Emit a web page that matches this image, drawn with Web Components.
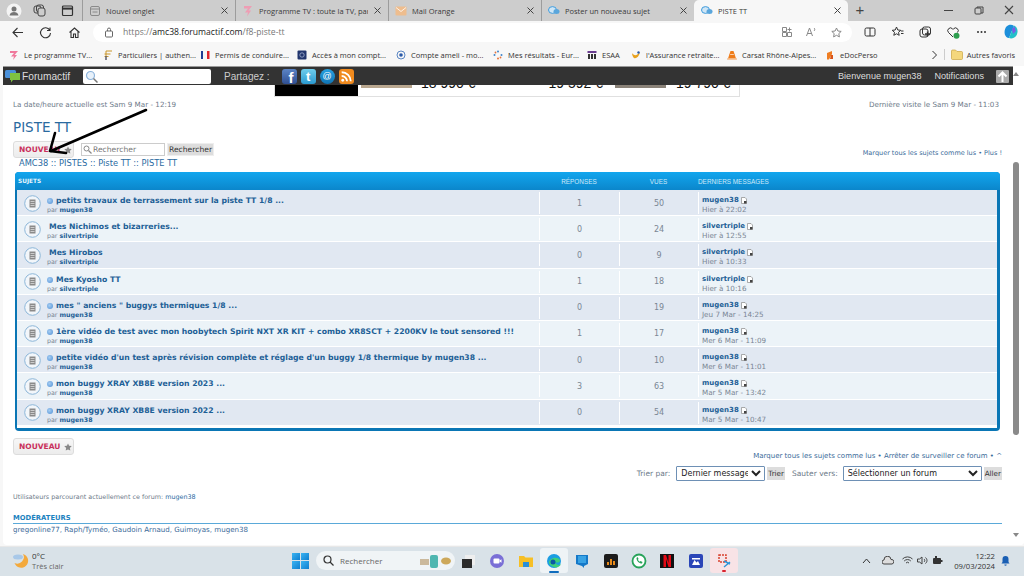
<!DOCTYPE html>
<html lang="fr">
<head>
<meta charset="utf-8">
<title>PISTE TT</title>
<style>
  html, body { margin: 0; height: 100%; overflow: hidden; }
  body {
    width: 1024px; height: 576px; position: relative;
    display: flex; flex-direction: column;
    font-family: "Segoe UI", "Open Sans", "Noto Sans", sans-serif;
    background: #f7f7f7;
  }
</style>
</head>
<body>
<tab-strip>
  <browser-tab icon="blank" label="Nouvel onglet"></browser-tab>
  <browser-tab icon="tv" label="Programme TV : toute la TV, par"></browser-tab>
  <browser-tab icon="mail" label="Mail Orange"></browser-tab>
  <browser-tab icon="chat" label="Poster un nouveau sujet"></browser-tab>
  <browser-tab icon="chat" label="PISTE TT" active></browser-tab>
</tab-strip>
<address-bar></address-bar>
<bookmark-bar>
  <bookmark-item w="94" icon="tv" label="Le programme TV..."></bookmark-item>
  <bookmark-item w="97" icon="franc" label="Particuliers | authen..."></bookmark-item>
  <bookmark-item w="97" icon="flag" label="Permis de conduire..."></bookmark-item>
  <bookmark-item w="99" icon="bank" label="Accès à mon compt..."></bookmark-item>
  <bookmark-item w="97" icon="ameli" label="Compte ameli - mo..."></bookmark-item>
  <bookmark-item w="94" icon="dots" label="Mes résultats - Eur..."></bookmark-item>
  <bookmark-item w="44" icon="esaa" label="ESAA"></bookmark-item>
  <bookmark-item w="96" icon="wing" label="l'Assurance retraite..."></bookmark-item>
  <bookmark-item w="98" icon="cone" label="Carsat Rhône-Alpes..."></bookmark-item>
  <bookmark-item w="80" icon="edoc" label="eDocPerso"></bookmark-item>
</bookmark-bar>
<forum-window>
  <forum-toolbar slot="top"></forum-toolbar>
  <forum-page></forum-page>
</forum-window>
<win-taskbar></win-taskbar>

<script>
const SANS = '"DejaVu Sans", Verdana, sans-serif';

class TabStrip extends HTMLElement {
  connectedCallback() {
    this.attachShadow({ mode: 'open' });
    this.shadowRoot.innerHTML = `
      <style>
        :host { display: flex; height: 21px; background: #cdcdcd; flex: none; align-items: stretch; }
        .left { width: 82px; display: flex; align-items: center; flex: none; position: relative; }
        .left svg { position: absolute; top: 4px; }
        .plus { width: 24px; text-align: center; color: #444; font-size: 15px; line-height: 20px; font-family: "Liberation Sans", sans-serif; }
        .win { margin-left: auto; display: flex; align-items: center; padding-right: 0; }
        .win svg { width: 30px; height: 11px; }
      </style>
      <div class="left">
        <svg style="left:6px;top:3px" width="16" height="16" viewBox="0 0 16 16"><circle cx="8" cy="8" r="7.5" fill="#f4f4f4"/><circle cx="8" cy="6" r="2.5" fill="#777"/><path d="M3.5 12.5c.6-2.8 2.4-3.6 4.5-3.6s3.9.8 4.5 3.6z" fill="#777"/></svg>
        <svg style="left:33px" width="13" height="13" viewBox="0 0 13 13" fill="none" stroke="#444"><rect x="1" y="2" width="7" height="7" rx="2"/><rect x="3.5" y="1" width="7" height="7" rx="2"/><rect x="5" y="4" width="7" height="8" rx="2" fill="#cdcdcd"/></svg>
        <svg style="left:61px" width="13" height="13" viewBox="0 0 13 13" fill="none" stroke="#333" stroke-width="1.2"><rect x="1.5" y="2" width="10" height="9.5" rx="1"/><path d="M1.5 4.6h10" stroke-width="2"/></svg>
      </div>
      <slot></slot>
      <div class="plus">+</div>
      <div class="win">
        <svg viewBox="0 0 30 11"><path d="M10 5.5h9" stroke="#444" fill="none"/></svg>
        <svg viewBox="0 0 30 11"><g fill="none" stroke="#444"><rect x="11" y="3" width="6" height="6" rx="1"/><path d="M13 3V2h6v6h-2"/></g></svg>
        <svg viewBox="0 0 30 11" style="width:30px"><path d="M11 1l8 8M19 1l-8 8" stroke="#444" stroke-width="1.1" fill="none"/></svg>
      </div>`;
  }
}
customElements.define('tab-strip', TabStrip);

class BrowserTab extends HTMLElement {
  connectedCallback() {
    const icons = {
      blank: '<rect x="1.5" y="1.5" width="9" height="9" rx="1.5" fill="none" stroke="#8a8a8a"/><path d="M1.5 4h9M3.5 7h5" stroke="#8a8a8a" fill="none"/>',
      tv: '<path d="M2 1h8L6.5 5.5H9l-4 6 1-4H3l3-4H2z" fill="#ee9db4"/>',
      mail: '<rect x="0.5" y="1.5" width="11" height="9" rx="1" fill="#eebd8e"/><path d="M1 2.5l5 4 5-4" fill="none" stroke="#fff" stroke-width=".8"/>',
      chat: '<ellipse cx="4.5" cy="5" rx="4" ry="3.4" fill="#cfe6f6" stroke="#3f9bdc"/><ellipse cx="8.5" cy="6.5" rx="3" ry="2.5" fill="#5aa6dc"/>'
    };
    const active = this.hasAttribute('active');
    this.attachShadow({ mode: 'open' });
    this.shadowRoot.innerHTML = `
      <style>
        :host { display: flex; width: 153px; box-sizing: border-box; align-items: center; padding: 0 6px 0 6px; gap: 5px; position: relative; flex: none;
                font-size: 7.500px; color: #3a3a3a; border-left: ${active ? '0' : '1px solid #9c9c9c'}; background-clip: padding-box; }
        :host([active]) { background: #f7f7f7; border-radius: 5px 5px 0 0; width: 154px; padding-left: 7px; }
        .label { flex: 1; white-space: nowrap; overflow: hidden; }
        svg { flex: none; }
        .x { flex: none; width: 9px; height: 9px; }
      </style>
      <svg width="12" height="12" viewBox="0 0 12 12">${icons[this.getAttribute('icon')]}</svg>
      <span class="label">${this.getAttribute('label')}</span>
      <svg class="x" viewBox="0 0 9 9"><path d="M1.500 1.500l6 6M7.500 1.500l-6 6" stroke="#444" fill="none"/></svg>`;
  }
}
customElements.define('browser-tab', BrowserTab);

class AddressBar extends HTMLElement {
  connectedCallback() {
    this.attachShadow({ mode: 'open' });
    this.shadowRoot.innerHTML = `
      <style>
        :host { display: flex; height: 22px; flex: none; align-items: center; background: #f7f7f7; }
        .nav { display: flex; width: 93px; flex: none; justify-content: space-around; padding: 0 4px 0 3px; box-sizing: border-box; }
        .url { width: 759px; height: 19px; flex: none; background: #fff; border-radius: 10px; display: flex; align-items: center; box-sizing: border-box; padding: 0 10px 0 11px; font-size: 8.600px; color: #777; }
        .url b { font-weight: 400; color: #222; }
        .u { margin-left: 9px; }
        .right { margin-left: auto; display: flex; gap: 14px; }
        .ext { display: flex; gap: 15px; padding-left: 12px; align-items: center; }
        svg { display: block; flex: none; }
      </style>
      <div class="nav">
        <svg width="13" height="13" viewBox="0 0 13 13" fill="none" stroke="#333" stroke-width="1.1"><path d="M12 6.5H2M6.5 2L2 6.5 6.5 11"/></svg>
        <svg width="13" height="13" viewBox="0 0 13 13" fill="none" stroke="#333" stroke-width="1.1"><path d="M10.8 4.2A5 5 0 1 0 11.5 7M11 1.500v3H8"/></svg>
        <svg width="13" height="13" viewBox="0 0 13 13" fill="none" stroke="#333" stroke-width="1.1"><path d="M1.500 6.500L6.500 2l5 4.500M3 5.500V11.500h2.500V8h2v3.500H10V5.500"/></svg>
      </div>
      <div class="url">
        <svg width="10" height="11" viewBox="0 0 10 11" fill="none" stroke="#666"><rect x="1.500" y="4" width="7" height="6" rx="1"/><path d="M3.500 4V2.500a1.500 1.500 0 0 1 3 0V4"/></svg>
        <span class="u">https://<b>amc38.forumactif.com</b>/f8-piste-tt</span>
        <div class="right">
          <svg width="10" height="10" viewBox="0 0 10 10" fill="none" stroke="#888"><path d="M.5.5h4v4h-4zM.5 5.500h4v4h-4zM5.500 5.500h4v4h-4zM5.500 2.500h4"/><path d="M7.500.5v4"/></svg>
          <svg width="11" height="10" viewBox="0 0 11 10" fill="none" stroke="#888"><path d="M.5 9l3-8 3 8M1.500 6.500h4M8 1c1 .8 1 2 0 3"/></svg>
          <svg width="11" height="11" viewBox="0 0 11 11" fill="none" stroke="#888"><path d="M5.500 1l1.400 3 3.300.4-2.400 2.200.6 3.300-2.900-1.600-2.900 1.600.6-3.300L.8 4.400 4.100 4z"/></svg>
        </div>
      </div>
      <div class="ext">
        <svg width="12" height="12" viewBox="0 0 12 12" fill="none" stroke="#333"><rect x="1" y="2" width="10" height="8" rx="1.500"/><path d="M6 2v8"/></svg>
        <svg width="13" height="12" viewBox="0 0 13 12" fill="none" stroke="#333"><path d="M5.500 1l1.300 3 3 .3-2.300 2 .7 3-2.700-1.500-2.700 1.500.7-3-2.300-2 3-.3zM10 5h2.500M10 7.500h2.500"/></svg>
        <svg width="13" height="13" viewBox="0 0 13 13" fill="none" stroke="#333"><rect x="1" y="3" width="8" height="8" rx="2"/><rect x="3.500" y="1" width="8" height="8" rx="2"/><path d="M6 8h5M8.500 5.500v5" stroke-width="1.300"/></svg>
        <svg width="13" height="13" viewBox="0 0 13 13"><path d="M6 11L1.500 6.500a2.700 2.700 0 0 1 4-3.700l.5.500.5-.5a2.700 2.700 0 0 1 4 3.700" fill="none" stroke="#333"/><circle cx="9.500" cy="9.800" r="3" fill="#2e9e4f"/></svg>
        <svg width="13" height="12" viewBox="0 0 13 12" fill="#333"><circle cx="3" cy="6" r="1"/><circle cx="6.500" cy="6" r="1"/><circle cx="10" cy="6" r="1"/></svg>
        <svg width="16" height="16" viewBox="0 0 16 16"><path d="M3 3c3-3 6-2.500 8-1L8 9l-2 5C2 14 0 8 3 3z" fill="#1c8fdb"/><path d="M11 1.500c4 1.500 4.500 7 2 10.500-1.500 2-4.500 3-7 2L8 9z" fill="#23c0c8"/><path d="M9 5l2.500-2.500L13 7l-3 3z" fill="#7a5be6"/></svg>
      </div>`;
  }
}
customElements.define('address-bar', AddressBar);

class BookmarkBar extends HTMLElement {
  connectedCallback() {
    this.attachShadow({ mode: 'open' });
    this.shadowRoot.innerHTML = `
      <style>
        :host { display: flex; height: 23px; flex: none; align-items: center; background: #f7f7f7; padding-left: 9px; font-size: 7.500px; color: #333; }
        .more { margin-left: auto; display: flex; align-items: center; gap: 4px; padding-right: 9px; white-space: nowrap; }
        .sep { width: 1px; height: 11px; background: #ccc; margin: 0 2px; }
      </style>
      <slot></slot>
      <div class="more">
        <svg width="7" height="10" viewBox="0 0 7 10"><path d="M1.500 1l4 4-4 4" fill="none" stroke="#333"/></svg>
        <span class="sep"></span>
        <svg width="12" height="11" viewBox="0 0 12 11"><path d="M.5 2a1 1 0 0 1 1-1h3l1.500 1.500h4.500a1 1 0 0 1 1 1V9.500a1 1 0 0 1-1 1h-9a1 1 0 0 1-1-1z" fill="#f4d77c" stroke="#c9a441" stroke-width=".7"/></svg>
        <span>Autres favoris</span>
      </div>`;
  }
}
customElements.define('bookmark-bar', BookmarkBar);

class BookmarkItem extends HTMLElement {
  connectedCallback() {
    const icons = {
      tv: '<path d="M1 1h8L5.500 5H8l-4 5 1-3.500H2l3-3.500H1z" fill="#f0799c"/>',
      franc: '<path d="M3 1h6M3 1v9M1.500 4h6M1.500 6.500h4" stroke="#c9962b" fill="none"/><path d="M3 6v4" stroke="#26408f" fill="none"/>',
      flag: '<path d="M1 1h2v8H1z" fill="#1f3f95"/><path d="M7 1h2.500v8H7z" fill="#e1262d"/>',
      bank: '<rect x=".5" y=".5" width="9" height="9" rx="1" fill="#22366e"/><circle cx="5" cy="5" r="2.200" fill="none" stroke="#b8c4e0" stroke-width=".7"/>',
      ameli: '<circle cx="5" cy="5" r="4" fill="none" stroke="#5a86c4"/><circle cx="5" cy="5" r="1.800" fill="#2a5aa8"/>',
      dots: '<g fill="#3f84c9"><circle cx="5" cy="1.500" r="1"/><circle cx="1.500" cy="5" r="1"/><circle cx="8.500" cy="5" r="1"/></g><g fill="#e8733a"><circle cx="5" cy="8.500" r="1"/><circle cx="2.500" cy="2.500" r=".9"/><circle cx="7.500" cy="7.500" r=".9"/></g>',
      esaa: '<rect x=".5" y="1" width="9" height="2" fill="#6a3d8f"/><path d="M1 4h2v5H1zM4 4h2v5H4zM7 4h2v5H7z" fill="#333"/>',
      wing: '<path d="M1 3c2 3 5 3 8-1-1 5-4 7-6 6C2 7.500 1 5 1 3z" fill="#e8a21f"/><circle cx="7.500" cy="2.500" r="1.200" fill="#2a5aa8"/>',
      cone: '<path d="M3.500 1h3L9 8.500H1z" fill="#ee7c1a"/><path d="M.5 8.500h9v1h-9zM3 4h4v1H3z" fill="#fff" stroke="#ee7c1a" stroke-width=".4"/>',
      edoc: '<path d="M2 3l5-2v3L4 9.500H2z" fill="#ef7d22"/><path d="M6 5h2v4H5z" fill="#d9541a"/>'
    };
    this.attachShadow({ mode: 'open' });
    this.shadowRoot.innerHTML = `
      <style>
        :host { display: flex; align-items: center; gap: 5px; flex: none; white-space: nowrap; width: ${this.getAttribute('w')}px; }
        svg { flex: none; }
      </style>
      <svg width="10" height="10" viewBox="0 0 10 10">${icons[this.getAttribute('icon')]}</svg><span>${this.getAttribute('label')}</span>`;
  }
}
customElements.define('bookmark-item', BookmarkItem);

class ForumWindow extends HTMLElement {
  connectedCallback() {
    this.attachShadow({ mode: 'open' });
    this.shadowRoot.innerHTML = `
      <style>
        :host { display: flex; height: 479px; flex: none; position: relative; margin-left: 3px; background: #fff; border-radius: 0 0 4px 4px; overflow: hidden; }
        .main { flex: 1; min-width: 0; display: flex; flex-direction: column; }
        .bar { width: 11px; flex: none; background: #fff; position: relative; }
        .thumb { width: 6px; height: 273px; margin-top: 96px; border-radius: 3px; background: #8a8a8a; }
        .up, .down { width: 0; height: 0; border-left: 3px solid transparent; border-right: 3px solid transparent; position: absolute; left: 0; }
        .up { top: 6px; border-bottom: 4px solid #888; }
        .down { bottom: 8px; border-top: 4px solid #888; }
        svg { position: absolute; left: 0; top: 0; pointer-events: none; }
      </style>
      <div class="main"><slot name="top"></slot><slot></slot></div>
      <div class="bar"><span class="up"></span><div class="thumb"></div><span class="down"></span></div>
      <svg width="200" height="120" viewBox="3 66 200 120" fill="none" stroke="#000" stroke-width="2.600" stroke-linecap="round" stroke-linejoin="round">
        <path d="M146 110L51 151"/><path d="M55 133L50 151L66 153"/>
      </svg>`;
  }
}
customElements.define('forum-window', ForumWindow);

class ForumToolbar extends HTMLElement {
  connectedCallback() {
    this.attachShadow({ mode: 'open' });
    this.shadowRoot.innerHTML = `
      <style>
        :host { display: flex; height: 19px; flex: none; align-items: center; background: #333; color: #ddd; font-family: "Liberation Sans", Arial, sans-serif; font-size: 9.100px; position: relative; z-index: 1; border-top: 1px solid #999; box-sizing: border-box; }
        .logo { display: flex; align-items: center; gap: 2px; padding-left: 2px; width: 80px; flex: none; box-sizing: border-box; font-size: 10.200px; }
        .search { width: 128px; height: 15px; background: #fff; border-radius: 2px; flex: none; display: flex; align-items: center; padding-left: 2px; box-sizing: border-box; }
        .share { margin-left: 13px; font-size: 10px; color: #ccc; flex: none; }
        .soc { display: flex; gap: 4px; margin-left: 12px; flex: none; }
        .soc span { width: 15px; height: 15px; border-radius: 3px; color: #fff; font: 700 11px/15px "Liberation Sans", sans-serif; text-align: center; display: block; overflow: hidden; }
        .user { margin-left: auto; display: flex; align-items: center; }
        .up { width: 13px; height: 13px; background: #aaa; border-radius: 1px; margin: 0 4px 0 12px; }
        .up svg { display: block; }
        .note { margin-left: 13px; }
      </style>
      <div class="logo">
        <svg width="15" height="14" viewBox="0 0 15 14"><rect x="0" y="1" width="11" height="8" rx="1.500" fill="#4a90d9"/><path d="M5 4h10v7H8l-2 2.500V11H5z" fill="#7fc241"/></svg>
        <span>Forumactif</span>
      </div>
      <div class="search"><svg width="15" height="13" viewBox="0 0 15 13" fill="none"><circle cx="5.500" cy="5.500" r="4" stroke="#8db4dc" stroke-width="1.200" fill="#e8f1fa"/><path d="M8.500 8.500l4 4" stroke="#777" stroke-width="1.500"/></svg></div>
      <span class="share">Partagez :</span>
      <div class="soc">
        <span style="background:linear-gradient(#5b84c4,#2f4f93);text-align:right;padding-right:3px;width:12px;font-size:15px;line-height:17px">f</span>
        <span style="background:linear-gradient(#6fcdec,#2b9ad0);font-size:13px">t</span>
        <span style="background:linear-gradient(#28a2e2,#0f74b4);border-radius:50%;font-size:9px;font-weight:400;line-height:14px">@</span>
        <span style="background:#f08a1e"><svg width="15" height="15" viewBox="0 0 14 14" fill="none" stroke="#fff" stroke-width="1.700"><circle cx="3.500" cy="10.500" r="1.300" fill="#fff" stroke="none"/><path d="M2.500 6.500a5 5 0 0 1 5 5M2.500 3a8.500 8.500 0 0 1 8.500 8.500"/></svg></span>
      </div>
      <div class="user">
        <span>Bienvenue mugen38</span><span class="note">Notifications</span>
        <div class="up"><svg width="13" height="13" viewBox="0 0 13 13" fill="none" stroke="#fff" stroke-width="2"><path d="M6.500 12V3M2.500 6.500l4-4 4 4"/></svg></div>
      </div>`;
  }
}
customElements.define('forum-toolbar', ForumToolbar);

class TopicRow extends HTMLElement {
  connectedCallback() {
    const a = n => this.getAttribute(n);
    this.attachShadow({ mode: 'open' });
    this.shadowRoot.innerHTML = `
      <style>
        :host { display: grid; grid-template-columns: 522px 80px 79px 1fr; height: 25.200px; margin-bottom: 1px; background: var(--row, #e1e8f2); font-family: ${SANS}; color: #7a8694; }
        .topic { display: flex; align-items: center; padding-left: 7px; min-width: 0; }
        .ic { flex: none; width: 17px; height: 17px; margin-right: 6px; }
        .txt { padding-top: 4px; }
        .t { white-space: nowrap; font: 700 7.700px/10px ${SANS}; color: #1d5f96; display: flex; align-items: center; }
        .dot { width: 6px; height: 6px; border-radius: 50%; background: radial-gradient(circle at 40% 40%, #a6cdf2, #4f90d6); margin-right: 3px; flex: none; }
        .nodot { width: 2px; flex: none; }
        .par { font-size: 6.300px; line-height: 8px; }
        .par b { color: #1d5f96; }
        .num { display: flex; align-items: center; justify-content: center; font-size: 8px; border-left: 1px solid #fff; margin: 2px 0; }
        .last { border-left: 1px solid #fff; margin: 2px 0; padding: 4px 0 0 3px; font-size: 7.200px; line-height: 9px; display: flex; flex-direction: column; justify-content: center; }
        .last b { color: #1d5f96; font-size: 7px; display: flex; align-items: center; gap: 2px; }
      </style>
      <div class="topic">
        <svg class="ic" viewBox="0 0 17 17"><circle cx="8.500" cy="8.500" r="7.800" fill="#f2f6fa" stroke="#8cb6d8" stroke-width="1"/><rect x="5.500" y="4.500" width="6" height="8" fill="#8a8a8a"/><path d="M6.500 6.500h4M6.500 8.500h4M6.500 10.500h4" stroke="#e6e6e6" stroke-width=".7"/></svg>
        <div class="txt">
          <div class="t">${this.hasAttribute('nodot') ? '<span class="nodot"></span>' : '<span class="dot"></span>'}<span>${a('topic')}</span></div>
          <div class="par">par <b>${a('by')}</b></div>
        </div>
      </div>
      <div class="num">${a('replies')}</div>
      <div class="num">${a('views')}</div>
      <div class="last">
        <b>${a('by')}<svg width="6" height="7" viewBox="0 0 6 7"><path d="M.5.500h3.500L5.500 2v4.500H.5z" fill="#fff" stroke="#888" stroke-width=".7"/><rect x="3" y="4" width="2.500" height="2.500" fill="#444"/></svg></b>
        <span>${a('date')}</span>
      </div>`;
  }
}
customElements.define('topic-row', TopicRow);

class NewButton extends HTMLElement {
  connectedCallback() {
    this.attachShadow({ mode: 'open' });
    this.shadowRoot.innerHTML = `
      <style>
        :host { display: inline-flex; width: 61px; height: 17px; box-sizing: border-box; align-items: center; gap: 4px; padding-left: 5px; background: linear-gradient(#f7f7f7, #ececec); border: 1px solid #ddd; border-radius: 3px; font: 700 7.500px ${SANS}; color: #c9305c; }
      </style>
      NOUVEAU<svg width="8" height="8" viewBox="0 0 10 10"><path d="M5 .5l1.400 3 3.300.4-2.400 2.200.6 3.300L5 8.200 2.100 9.400l.6-3.300L.3 3.900l3.300-.4z" fill="#888"/></svg>`;
  }
}
customElements.define('new-button', NewButton);

class ForumPage extends HTMLElement {
  connectedCallback() {
    const rows = [
      ['petits travaux de terrassement sur la piste TT 1/8 ...', 'mugen38', 1, 50, 'Hier à 22:02'],
      ['Mes Nichimos et bizarreries...', 'silvertriple', 0, 24, 'Hier à 12:55', 1],
      ['Mes Hirobos', 'silvertriple', 0, 9, 'Hier à 10:33', 1],
      ['Mes Kyosho TT', 'silvertriple', 1, 18, 'Hier à 10:16'],
      ['mes " anciens " buggys thermiques 1/8 ...', 'mugen38', 0, 19, 'Jeu 7 Mar - 14:25'],
      ['1ère vidéo de test avec mon hoobytech Spirit NXT XR KIT + combo XR8SCT + 2200KV le tout sensored !!!', 'mugen38', 1, 17, 'Mer 6 Mar - 11:09'],
      ["petite vidéo d'un test après révision complète et réglage d'un buggy 1/8 thermique by mugen38 ...", 'mugen38', 0, 10, 'Mer 6 Mar - 11:01'],
      ['mon buggy XRAY XB8E version 2023 ...', 'mugen38', 3, 63, 'Mar 5 Mar - 13:42'],
      ['mon buggy XRAY XB8E version 2022 ...', 'mugen38', 0, 54, 'Mar 5 Mar - 10:47']
    ];
    const rowHtml = rows.map((r, i) => `<topic-row style="--row:${i % 2 ? '#ecf3f8' : '#e1e8f2'}" topic="${r[0].replace(/"/g, '&quot;')}" by="${r[1]}" replies="${r[2]}" views="${r[3]}" date="${r[4]}"${r[5] ? ' nodot' : ''}></topic-row>`).join('');
    this.attachShadow({ mode: 'open' });
    this.shadowRoot.innerHTML = `
      <style>
        :host { display: block; flex: 1; padding: 0 11px 0 10px; font: 7.200px ${SANS}; color: #6d7a89; overflow: hidden; }
        a { color: #2a6a9f; text-decoration: none; }
        .ad { margin-left: 261px; width: 466px; height: 12px; box-sizing: border-box; border: 1px solid #e0e0e0; border-top: 0; display: flex; overflow: hidden; font: 14px/14px "Liberation Sans", sans-serif; color: #111; }
        .blk { width: 83px; background: #000; flex: none; }
        .pic { width: 51px; height: 3px; background: #b9a78f; flex: none; margin-left: 3px; }
        .price { flex: none; white-space: nowrap; margin-top: -9px; height: 14px; }
        .top { display: flex; justify-content: space-between; margin-top: 3px; line-height: 9px; }
        h1 { font: 400 13.500px/17px ${SANS}; color: #2a6a9f; margin: 10px 0 5px; }
        .actions { display: flex; align-items: center; height: 17px; }
        .sbox { margin-left: 7px; width: 84px; height: 13px; box-sizing: border-box; border: 1px solid #ccc; display: flex; align-items: center; gap: 1px; font-size: 7.600px; color: #777; padding-left: 1px; }
        .sbtn { margin-left: 2px; height: 13px; background: #ddd; border: 1px solid #eee; box-sizing: border-box; padding: 0 1px; font: 7.600px/11px ${SANS}; color: #333; }
        .mark { margin-left: auto; margin-top: 6px; font-size: 6.500px; color: #3a6a99; }
        .crumb { font-size: 8.300px; line-height: 10px; margin: 0 0 4px 6px; color: #2a6a9f; }
        .table { width: 985px; margin-left: 2px; box-sizing: border-box; background: #0a76b5; border-radius: 4px; padding: 0 3px 3px 2px; height: 259px; }
        .head { display: grid; grid-template-columns: 522px 80px 79px 1fr; height: 18px; margin: 0 -3px 0 -2px; padding: 0 3px 0 2px; align-items: center; border-radius: 4px 4px 0 0; background: linear-gradient(#12a6ee, #0b86cb); color: #cfe9f9; font: 400 6.400px "Liberation Sans", Arial, sans-serif; }
        .head span:first-child { font: 700 5.800px ${SANS}; color: #e6f5fd; padding-left: 1px; }
        .head .c { text-align: center; }
        .body { background: #fff; height: 238px; overflow: hidden; }
        .links { display: flex; justify-content: flex-end; font-size: 7px; line-height: 10px; color: #3a6a99; }
        .filters { display: flex; justify-content: flex-end; align-items: center; margin-top: 4px; height: 16px; font-size: 7.500px; }
        select { font: 8px ${SANS}; color: #222; height: 15px; box-sizing: border-box; border: 1px solid #6e90b5; background: #fff; padding: 0; border-radius: 1px; }
        .go { background: #ddd; font: 7.200px/13px ${SANS}; height: 13px; padding: 0 1px; margin-left: 2px; color: #333; }
        .who { margin-top: 12px; font-size: 6.400px; line-height: 9px; }
        h2 { font: 700 6.800px/9px ${SANS}; color: #1c82c0; margin: 12px 0 0; border-bottom: 1px solid #5aa9d9; padding-bottom: 0; }
        .mods { font-size: 7.100px; line-height: 10px; margin-top: 1px; color: #3a6a99; }
      </style>
      <div class="ad"><div class="blk"></div><div class="pic"></div><span class="price" style="margin-left:9px">18 990 €</span><span class="price" style="margin-left:73px">19 592 €</span><div class="pic" style="margin-left:12px;background:#8a8278"></div><span class="price" style="margin-left:10px">19 790 €</span></div>
      <div class="top"><span>La date/heure actuelle est Sam 9 Mar - 12:19</span><span style="margin-right:3px">Dernière visite le Sam 9 Mar - 11:03</span></div>
      <h1>PISTE TT</h1>
      <div class="actions">
        <new-button></new-button>
        <div class="sbox"><svg width="9" height="9" viewBox="0 0 9 9" fill="none" stroke="#888"><circle cx="3.500" cy="3.500" r="2.500"/><path d="M5.500 5.500l3 3" stroke-width="1.300"/></svg>Rechercher</div>
        <div class="sbtn">Rechercher</div>
        <span class="mark">Marquer tous les sujets comme lus • Plus !</span>
      </div>
      <div class="crumb">AMC38 :: PISTES :: Piste TT :: PISTE TT</div>
      <div class="table">
        <div class="head"><span>SUJETS</span><span class="c">RÉPONSES</span><span class="c">VUES</span><span>DERNIERS MESSAGES</span></div>
        <div class="body">${rowHtml}</div>
      </div>
      <div style="margin-top:7px;height:13px"><new-button></new-button></div>
      <div class="links">Marquer tous les sujets comme lus • Arrêter de surveiller ce forum • ^</div>
      <div class="filters">
        <span>Trier par:</span>
        <select style="margin-left:6px;width:89px"><option>Dernier message</option></select>
        <span class="go">Trier</span>
        <span style="margin-left:7px">Sauter vers:</span>
        <select style="margin-left:5px;width:139px"><option>Sélectionner un forum</option></select>
        <span class="go">Aller</span>
      </div>
      <div class="who">Utilisateurs parcourant actuellement ce forum: <a>mugen38</a></div>
      <h2>MODÉRATEURS</h2>
      <div class="mods">gregonline77, Raph/Tyméo, Gaudoin Arnaud, Guimoyas, mugen38</div>`;
  }
}
customElements.define('forum-page', ForumPage);

class WinTaskbar extends HTMLElement {
  connectedCallback() {
    const icons = [
      '<rect x="4" y="2" width="10" height="10" fill="#eee"/><rect x="1" y="6" width="10" height="9" fill="#2b2b2b"/>',
      '<circle cx="8" cy="8" r="7" fill="#7a6fd6"/><rect x="4.500" y="5.500" width="6" height="5" rx="1" fill="#fff"/><path d="M10.500 7.500l2-1.200v3.400l-2-1.200z" fill="#fff"/>',
      '<path d="M1 3h5l1.500 1.500H15V14H1z" fill="#f6bf26"/><rect x="5" y="9" width="6" height="5" fill="#2a8fd8"/>',
      '<circle cx="8" cy="8" r="7" fill="#1b9de2"/><path d="M3 9c1-4 8-6 11-2 .5 3-4 3-5 2 1 3 4 4 6 2-1 3-5 4-7 3C5 13 3 12 3 9z" fill="#3fd07b"/><circle cx="7" cy="9" r="2.500" fill="#0c59a4"/>',
      '<path d="M2 2h12v9l-4 2v2l-2-2-6-2z" fill="#1478c8"/><rect x="4" y="3" width="8" height="7" fill="#38a2e4"/>',
      '<rect x="1" y="1" width="14" height="14" rx="2" fill="#1c1c1c"/><path d="M4 12V9h2v3zM7 12V6h2v6zM10 12V8h2v4z" fill="#e88a1a"/>',
      '<circle cx="8" cy="8" r="6.500" fill="#fff" stroke="#28a35a" stroke-width="1.800"/><path d="M5.500 5c0 3 2.500 5.500 5.500 5.500l.5-1.500-2-1-.8.7C7.800 8.200 7.200 7.500 6.900 6.700l.7-.8-1-2z" fill="#28a35a"/>',
      '<rect x="1" y="1" width="14" height="14" fill="#111"/><path d="M4.500 2h2.500l2.500 8V2H12v12H9.500L7 6v8H4.500z" fill="#e50914"/>',
      '<rect x="1" y="1" width="14" height="14" rx="2" fill="#2a46b8"/><path d="M4 12l2.500-5 2 2.500L10 8l2 4z" fill="#fff"/><path d="M4 5h8v1.500H4z" fill="#fff"/>',
      '<rect x="3" y="2" width="7" height="7" fill="none" stroke="#d8432f" stroke-width="1.500" stroke-dasharray="2 1"/><path d="M8 8l6 3M8 14l6-5" stroke="#2a96d8" stroke-width="1.400"/>'
    ];
    const cells = icons.map((s, i) => `<div class="cell${i === 3 ? ' on' : ''}${i === 9 ? ' sel' : ''}"><svg width="16" height="16" viewBox="0 0 16 16">${s}</svg></div>`).join('');
    this.attachShadow({ mode: 'open' });
    this.shadowRoot.innerHTML = `
      <style>
        :host { display: flex; height: 31px; flex: none; align-items: center; margin-top: 1px; margin-bottom: -1px; padding-bottom: 3px; background: #d9e2e8; border-top: 1px solid #e8e8e8; box-sizing: border-box; font-size: 8px; color: #333; position: relative; }
        .weather { display: flex; width: 292px; flex: none; padding-left: 12px; box-sizing: border-box; gap: 2px; align-items: center; line-height: 10px; }
        .weather small { font-size: 7.500px; color: #666; display: block; }
        .start { width: 17px; height: 16px; flex: none; display: grid; grid-template-columns: 1fr 1fr; gap: 1px; margin-right: 7px; }
        .start i { background: linear-gradient(135deg, #3bb4f2, #0f7fd0); }
        .pill { width: 139px; height: 19px; background: #f0f4f6; border-radius: 10px; display: flex; align-items: center; flex: none; padding-left: 7px; box-sizing: border-box; gap: 6px; color: #666; font-size: 8px; }
        .deco { margin-left: auto; padding-right: 2px; }
        .apps { display: flex; flex: none; }
        .cell { width: 28.300px; height: 25px; display: flex; align-items: center; justify-content: center; position: relative; flex: none; border-radius: 3px; box-sizing: border-box; }
        .on { background: #eef3f6; }
        .on::after { content: ""; position: absolute; bottom: 0; left: 9px; width: 10px; height: 2px; background: #0f6cbd; border-radius: 1px; }
        .sel { background: #f8e3e6; }
        .sel::after { content: ""; position: absolute; bottom: 1px; left: 12px; width: 4px; height: 2px; background: #d8232f; border-radius: 1px; }
        .tray { margin-left: auto; display: flex; align-items: center; gap: 4px; padding-right: 14px; }
        .clock { text-align: right; font-size: 7.700px; line-height: 10px; margin-left: 7px; margin-right: 2px; }
      </style>
      <div class="weather">
        <svg width="18" height="18" viewBox="0 0 18 18"><path d="M11 2a7 7 0 1 1-8.500 9A6.500 6.500 0 0 0 11 2z" fill="#f3a93c"/><ellipse cx="6" cy="5" rx="5" ry="2.500" fill="#a8c8e8"/></svg>
        <div>0°C<small>Très clair</small></div>
      </div>
      <div class="start"><i></i><i></i><i></i><i></i></div>
      <div class="pill">
        <svg width="11" height="11" viewBox="0 0 11 11" fill="none" stroke="#333" stroke-width="1.200"><circle cx="4.500" cy="4.500" r="3.500"/><path d="M7 7l3.500 3.500"/></svg>
        <span>Rechercher</span>
        <svg class="deco" width="34" height="16" viewBox="0 0 34 16"><rect x="1" y="6" width="9" height="6" fill="#cbb99c"/><rect x="11" y="2" width="8" height="13" rx="2" fill="#4fb6b0"/><ellipse cx="27" cy="8" rx="5" ry="3.500" fill="#cda85a"/></svg>
      </div>
      <div class="apps">${cells}</div>
      <div class="tray">
        <svg width="9" height="6" viewBox="0 0 9 6"><path d="M1 5l3.500-4L8 5" fill="none" stroke="#333"/></svg>
        <svg width="12" height="9" viewBox="0 0 12 9" style="margin-left:7px"><path d="M2 8a2 2 0 0 1 0-4 3.500 3.500 0 0 1 7-.5A2.300 2.300 0 0 1 10 8z" fill="#ddd" stroke="#444"/></svg>
        <svg width="11" height="9" viewBox="0 0 11 9" fill="none" stroke="#444" style="margin-left:4px"><path d="M.5 3a7 7 0 0 1 10 0M2.200 5a4.500 4.500 0 0 1 6.600 0M4 7a2 2 0 0 1 3 0"/></svg>
        <svg width="11" height="9" viewBox="0 0 11 9" fill="none" stroke="#444"><path d="M.5 3v3h2l2.500 2V1L2.500 3zM7 3c1 1 1 2 0 3M8.500 1.500c2 2 2 4 0 6"/></svg>
        <svg width="11" height="9" viewBox="0 0 11 9" fill="#333"><rect x="1" y="2" width="8" height="6" rx="1"/><rect x="9" y="4" width="1.500" height="2"/><rect x="3" y="0" width="2" height="2"/></svg>
        <div class="clock">12:22<br>09/03/2024</div>
        <svg width="9" height="11" viewBox="0 0 9 11" fill="#1a5fb4"><path d="M4.500 1a3 3 0 0 1 3 3v3l1 1.500H.5L1.500 7V4a3 3 0 0 1 3-3zM3.300 9.500h2.400a1.200 1.200 0 0 1-2.400 0z"/></svg>
      </div>`;
  }
}
customElements.define('win-taskbar', WinTaskbar);
</script>
</body>
</html>
